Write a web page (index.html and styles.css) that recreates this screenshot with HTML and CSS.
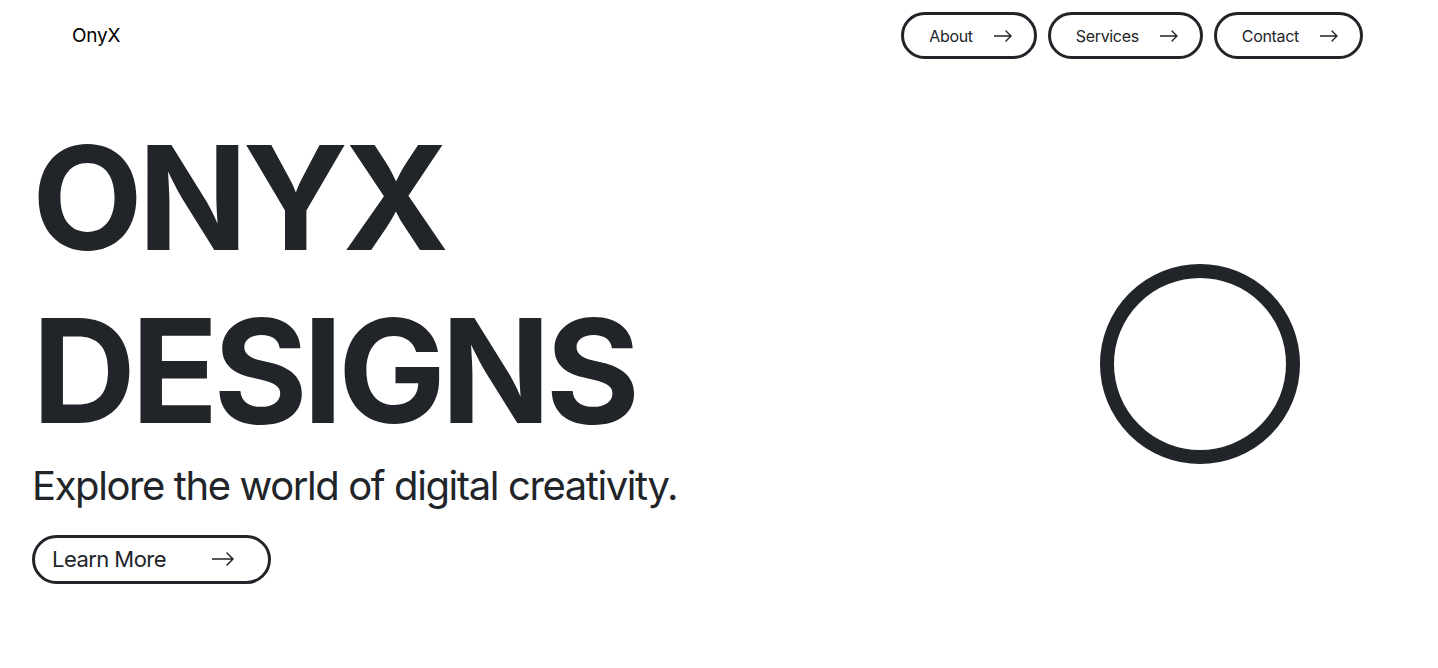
FILE: index.html
```html
<!DOCTYPE html>
<html lang="en">
<head>
<meta charset="utf-8">
<title>OnyX</title>
<link rel="stylesheet" href="styles.css">
</head>
<body>
<header class="header">
  <a class="logo" href="#">OnyX</a>
  <nav class="nav">
    <a class="pill" href="#">About <svg class="arrow" viewBox="0 0 18 12" width="18" height="12"><path d="M0 6H17M12 1L17 6L12 11" fill="none" stroke="currentColor" stroke-width="1.4" stroke-linecap="round" stroke-linejoin="round"/></svg></a>
    <a class="pill" href="#">Services <svg class="arrow" viewBox="0 0 18 12" width="18" height="12"><path d="M0 6H17M12 1L17 6L12 11" fill="none" stroke="currentColor" stroke-width="1.4" stroke-linecap="round" stroke-linejoin="round"/></svg></a>
    <a class="pill" href="#">Contact <svg class="arrow" viewBox="0 0 18 12" width="18" height="12"><path d="M0 6H17M12 1L17 6L12 11" fill="none" stroke="currentColor" stroke-width="1.4" stroke-linecap="round" stroke-linejoin="round"/></svg></a>
  </nav>
</header>
<main class="hero">
  <div class="hero-text">
    <h1 class="title">ONYX<br>DESIGNS</h1>
    <p class="lead">Explore the world of digital creativity.</p>
    <a class="pill pill-lg" href="#"><span>Learn More</span> <svg class="arrow" viewBox="0 0 22 14" width="22" height="14"><path d="M0 7H21M15 1L21 7L15 13" fill="none" stroke="currentColor" stroke-width="1.5" stroke-linecap="round" stroke-linejoin="round"/></svg></a>
  </div>
  <div class="hero-art">
    <div class="ring"></div>
  </div>
</main>
</body>
</html>
```
FILE: styles.css
```css
* { box-sizing: border-box; }
html, body { margin: 0; padding: 0; background: #fff; }
body {
  font-family: Inter, "Noto Sans", sans-serif;
  color: #212529;
}
a { color: inherit; text-decoration: none; }

.header {
  display: flex;
  align-items: center;
  justify-content: space-between;
  padding: 12px 75px 0 72px;
}
.logo {
  font-size: 19px;
  color: #000;
  line-height: 47px;
  letter-spacing: -0.01em;
}
.nav {
  display: flex;
  gap: 11px;
}
.pill {
  display: inline-flex;
  align-items: center;
  gap: 21px;
  border: 3px solid #212529;
  border-radius: 999px;
  height: 47px;
  padding: 0 22px 0 25px;
  font-size: 16px;
  letter-spacing: -0.02em;
  color: #212529;
}
.arrow { display: block; }

.hero {
  display: flex;
  align-items: center;
  justify-content: space-between;
  padding: 53px 138px 0 32px;
}
.hero-art {
  padding-top: 32px;
}
.title {
  margin: 0;
  font-size: 144px;
  font-weight: 700;
  line-height: 1.2;
  letter-spacing: -0.035em;
}
.lead {
  margin: 4px 0 25px;
  font-size: 40px;
  font-weight: 400;
  line-height: 1.2;
  letter-spacing: -0.035em;
}
.pill-lg {
  height: 49px;
  width: 239px;
  padding: 0 34px 0 17px;
  font-size: 22px;
  letter-spacing: -0.025em;
  justify-content: space-between;
}
.ring {
  width: 200px;
  height: 200px;
  border: 14px solid #212529;
  border-radius: 50%;
}
```
